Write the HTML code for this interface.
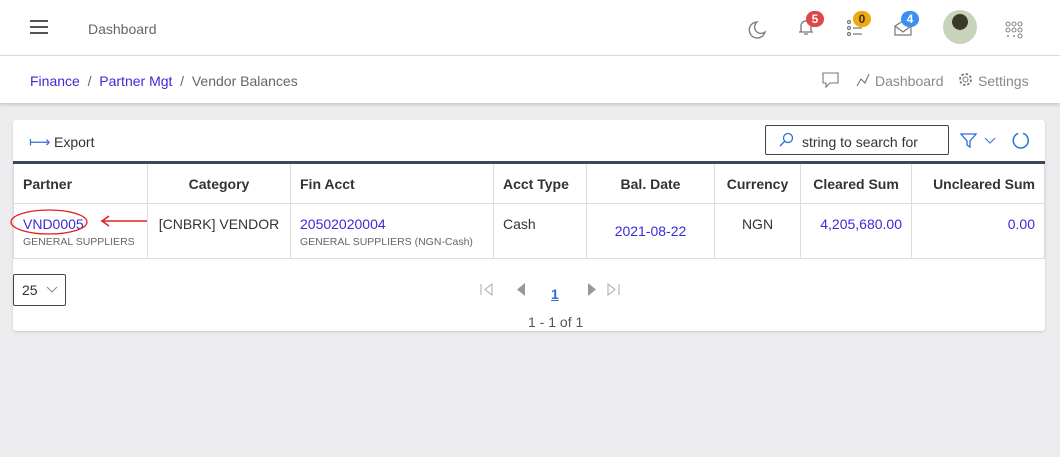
<!DOCTYPE html><html><head><style>
body{margin:0;width:1060px;height:457px;background:#ececee;font-family:"Liberation Sans",sans-serif;position:relative;overflow:hidden;font-size:14px;color:#333}
.a{position:absolute}
.top{left:0;top:0;width:1060px;height:55px;background:#fff;border-bottom:1px solid #dcdcdc}
.bc{left:0;top:56px;width:1060px;height:47px;background:#fff;box-shadow:0 2px 3px rgba(0,0,0,.15)}
.card{left:13px;top:120px;width:1032px;height:211px;background:#fff;border-radius:3px;box-shadow:0 1px 2px rgba(0,0,0,.15)}
.badge{position:absolute;height:16px;min-width:10px;border-radius:8px;color:#fff;font-size:12px;font-weight:bold;text-align:center;line-height:16px;padding:0 4px}
table{border-collapse:collapse;position:absolute;left:0;top:41px;width:1032px;border-top:3px solid #3d4556}
td,th{border:1px solid #ddd;padding:0 9px;font-size:14px}
th{height:39px;font-weight:bold;color:#333}
td{height:55px;vertical-align:top;padding-top:12px;box-sizing:border-box}
.l{color:#3b2bd6}.s{font-size:10.5px;color:#666;display:block;margin-top:4px}
</style></head><body>
<div class="a top">
<div class="a" style="left:30px;top:20px;width:18px;height:2px;background:#555;box-shadow:0 6px 0 #555,0 12px 0 #555"></div>
<div class="a" style="left:88px;top:21px;color:#666">Dashboard</div>
<svg class="a" style="left:747px;top:20px" width="20" height="20" viewBox="0 0 20 20"><path d="M10 2a8 8 0 1 0 8 10A6 6 0 0 1 10 2z" fill="none" stroke="#777" stroke-width="1.3"/></svg>
<svg class="a" style="left:798px;top:18px" width="16" height="18"><path d="M3 14V8a5 5 0 0 1 10 0v6h2H1zM6 16h4" fill="none" stroke="#777" stroke-width="1.3"/></svg>
<div class="badge" style="left:806px;top:11px;background:#e04646">5</div>
<svg class="a" style="left:847px;top:19px" width="16" height="18"><g fill="none" stroke="#777" stroke-width="1.2"><circle cx="2" cy="3" r="1.5"/><circle cx="2" cy="9" r="1.5"/><circle cx="2" cy="15" r="1.5"/><path d="M6 9h9M6 15h9"/></g></svg>
<div class="badge" style="left:853px;top:11px;background:#f0a90a;color:#333">0</div>
<svg class="a" style="left:894px;top:20px" width="18" height="16"><path d="M1 6l8-5 8 5v9H1zM1 6l8 6 8-6" fill="none" stroke="#777" stroke-width="1.2"/></svg>
<div class="badge" style="left:901px;top:11px;background:#3a8ff0">4</div>
<div class="a" style="left:943px;top:10px;width:34px;height:34px;border-radius:50%;background:radial-gradient(circle at 50% 35%,#3a3a2a 0 28%,#c7d4bc 29%)"></div>
<svg class="a" style="left:1005px;top:21px" width="20" height="18"><g fill="none" stroke="#888" stroke-width="1.1"><circle cx="3" cy="3" r="2"/><circle cx="9" cy="3" r="2"/><circle cx="15" cy="3" r="2"/><circle cx="3" cy="9" r="2"/><circle cx="9" cy="9" r="2"/><circle cx="15" cy="9" r="2"/><circle cx="15" cy="15" r="2"/></g><g fill="#888"><circle cx="3" cy="15" r="1"/><circle cx="9" cy="15" r="1"/></g></svg>
</div>
<div class="a bc">
<div class="a" style="left:30px;top:17px;color:#666"><span class="l">Finance</span> &nbsp;/&nbsp; <span class="l">Partner Mgt</span> &nbsp;/&nbsp; Vendor Balances</div>
<svg class="a" style="left:822px;top:16px" width="17" height="17"><path d="M1 1h15v10H8l-4 4v-4H1z" fill="none" stroke="#777" stroke-width="1.1"/></svg>
<svg class="a" style="left:855px;top:16px" width="16" height="16"><path d="M2 14l4-7 4 4 4-9" fill="none" stroke="#777" stroke-width="1.1"/></svg>
<div class="a" style="left:875px;top:17px;color:#888">Dashboard</div>
<svg class="a" style="left:957px;top:15px" width="17" height="17"><circle cx="8.5" cy="8.5" r="5.5" fill="none" stroke="#777" stroke-width="1.8" stroke-dasharray="2.5 1.8"/><circle cx="8.5" cy="8.5" r="2.5" fill="none" stroke="#777"/></svg>
<div class="a" style="left:978px;top:17px;color:#888">Settings</div>
</div>
<div class="a card">
<div class="a" style="left:16px;top:13px;color:#3a6fd8;font-size:15px">&#x27FC;</div>
<div class="a" style="left:41px;top:14px;color:#333">Export</div>
<div class="a" style="left:752px;top:5px;width:184px;height:30px;border:1px solid #444;border-radius:2px;box-sizing:border-box"></div>
<svg class="a" style="left:765px;top:12px" width="16" height="16"><circle cx="10" cy="6" r="4.5" fill="none" stroke="#2a6fd8" stroke-width="1.3"/><path d="M7 9L2 14" stroke="#2a6fd8" stroke-width="1.3"/></svg>
<div class="a" style="left:789px;top:14px;color:#333">string to search for</div>
<svg class="a" style="left:947px;top:12px" width="40" height="18"><path d="M1 2h15l-6 7v6l-3-2V9z" fill="none" stroke="#2a6fd8" stroke-width="1.3"/><path d="M25 6l5 5 5-5" fill="none" stroke="#2a6fd8"/></svg>
<svg class="a" style="left:998px;top:11px" width="20" height="20"><path d="M7 2.5A7.5 7.5 0 1 0 12 2.3" fill="none" stroke="#2a6fd8" stroke-width="1.5"/></svg>
<table>
<tr><th style="text-align:left;width:115px">Partner</th><th style="width:124px">Category</th><th style="text-align:left;width:184px">Fin Acct</th><th style="text-align:left;width:74px">Acct Type</th><th style="width:109px">Bal. Date</th><th style="width:67px">Currency</th><th style="width:92px">Cleared Sum</th><th style="text-align:right">Uncleared Sum</th></tr>
<tr><td><span class="l">VND0005</span><span class="s">GENERAL SUPPLIERS</span></td><td style="text-align:center">[CNBRK] VENDOR</td><td><span class="l">20502020004</span><span class="s">GENERAL SUPPLIERS (NGN-Cash)</span></td><td>Cash</td><td class="l" style="text-align:center;padding-top:19px">2021-08-22</td><td style="text-align:center">NGN</td><td class="l" style="text-align:right">4,205,680.00</td><td class="l" style="text-align:right">0.00</td></tr>
</table>
<svg class="a" style="left:-6px;top:86px" width="150" height="36"><ellipse cx="42" cy="16" rx="38" ry="12" fill="none" stroke="#e02020" stroke-width="1.3"/><path d="M140 15H94M102 10l-7 5 7 5" fill="none" stroke="#e02020" stroke-width="1.5"/></svg>
<div class="a" style="left:0;top:154px;width:53px;height:32px;border:1px solid #444;border-radius:2px;box-sizing:border-box"></div>
<div class="a" style="left:9px;top:162px">25</div>
<svg class="a" style="left:33px;top:166px" width="12" height="8"><path d="M1 1l5 5 5-5" fill="none" stroke="#888"/></svg>
<svg class="a" style="left:466px;top:162px" width="160" height="16"><g fill="none" stroke="#aaa"><path d="M2 2v11M13 2L6 7.5 13 13z"/><path d="M140 2v11M129 2l7 5.5-7 5.5z"/></g><path d="M46 1L38 7.5 46 14z" fill="#999"/><path d="M109 1l8 6.5-8 6.5z" fill="#999"/></svg>
<div class="a" style="left:538px;top:166px;color:#2a6fd8;font-weight:bold;text-decoration:underline">1</div>
<div class="a" style="left:515px;top:194px;color:#555">1 - 1 of 1</div>
</div>
</body></html>
